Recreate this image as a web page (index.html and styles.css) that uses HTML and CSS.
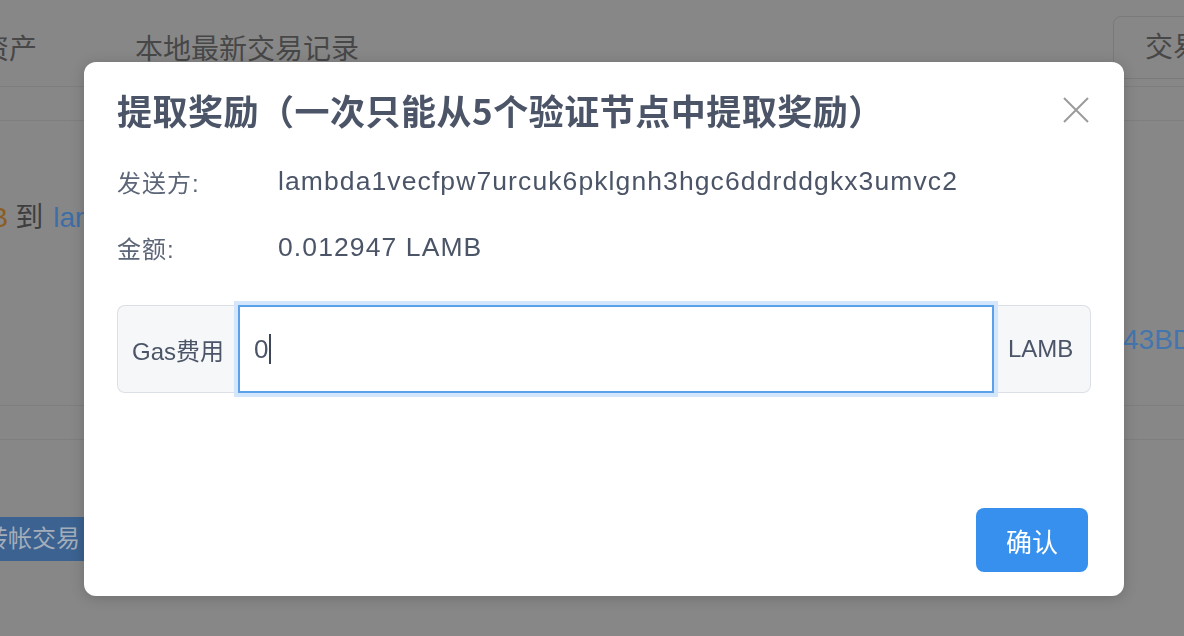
FILE: index.html
```html
<!DOCTYPE html>
<html lang="zh">
<head>
<meta charset="utf-8">
<title>提取奖励</title>
<link rel="stylesheet" href="styles.css">
</head>
<body>
<div class="page">
  <div class="topbar">
    <div class="tabs">
      <span class="tab">资产</span>
      <span class="tab">本地最新交易记录</span>
    </div>
    <div class="topbtn">交易记录</div>
  </div>
  <div class="subbar"></div>
  <div class="row-tx">
    <span class="amt">LAMB</span>
    <span class="to">到</span>
    <span class="addr">lambda1vecfpw7urcuk6pklgnh3hgc6ddrddgkx3umvc2</span>
  </div>
  <div class="row-hash"><span class="hash">43BD9A0C71E2</span></div>
  <div class="sep"></div>
  <div class="sep2"></div>
  <div class="row-btn"><span class="bgbtn">转帐交易</span></div>
</div>

<div class="mask">
  <div class="modal">
    <div class="modal-head">
      <h2 class="modal-title">提取奖励（一次只能从5个验证节点中提取奖励）</h2>
      <svg class="close" width="30" height="30" viewBox="0 0 30 30" aria-label="关闭">
        <path d="M3 3 L27 27 M27 3 L3 27" stroke="#9b9b9b" stroke-width="2" fill="none"/>
      </svg>
    </div>
    <div class="field first">
      <span class="label">发送方:</span>
      <span class="value">lambda1vecfpw7urcuk6pklgnh3hgc6ddrddgkx3umvc2</span>
    </div>
    <div class="field">
      <span class="label">金额:</span>
      <span class="value">0.012947 LAMB</span>
    </div>
    <div class="input-group">
      <div class="addon addon-left">Gas费用</div>
      <div class="input"><span class="input-text">0</span><span class="caret"></span></div>
      <div class="addon addon-right">LAMB</div>
    </div>
    <div class="modal-foot">
      <button class="confirm">确认</button>
    </div>
  </div>
</div>
</body>
</html>
```
FILE: styles.css
```css
* { box-sizing: border-box; }
html, body { margin: 0; padding: 0; }
body {
  width: 1184px;
  height: 636px;
  overflow: hidden;
  font-family: "Liberation Sans", "Noto Sans CJK SC", sans-serif;
}
.page {
  width: 1184px;
  height: 636px;
  background: #878787;
  overflow: hidden;
}
.topbar {
  height: 87px;
  border-bottom: 1px solid #7e7e7e;
  display: flex;
  align-items: flex-start;
}
.tabs {
  display: flex;
  gap: 98px;
  margin-left: -19px;
  padding-top: 14px;
}
.tab {
  font-size: 28px;
  line-height: 72px;
  color: #474747;
  white-space: nowrap;
}
.topbtn {
  margin-left: auto;
  margin-right: -80px;
  margin-top: 16px;
  height: 63px;
  width: 151px;
  border: 1px solid #7a7a7a;
  border-radius: 8px;
  padding-left: 31px;
  font-size: 28px;
  line-height: 61px;
  color: #474747;
  white-space: nowrap;
  overflow: hidden;
}
.subbar {
  height: 34px;
  border-bottom: 1px solid #7e7e7e;
}
.row-tx {
  margin-top: 77px;
  margin-left: -68px;
  height: 40px;
  line-height: 40px;
  font-size: 28px;
  white-space: nowrap;
  display: flex;
  gap: 7px;
}
.amt { color: #8c5c22; }
.to { color: #3e3e3e; }
.addr { color: #3e6ea6; margin-left: 3px; }
.row-hash {
  margin-top: 82px;
  height: 40px;
  line-height: 40px;
  padding-left: 1123px;
  font-size: 28px;
  white-space: nowrap;
  overflow: hidden;
}
.hash { color: #4376ad; }
.sep {
  margin-top: 45px;
  border-bottom: 1px solid #7e7e7e;
}
.sep2 {
  margin-top: 33px;
  border-bottom: 1px solid #7e7e7e;
}
.row-btn {
  margin-top: 77px;
}
.bgbtn {
  display: inline-block;
  margin-left: -40px;
  height: 44px;
  width: 200px;
  padding-left: 24px;
  background: #3b6290;
  color: #a4adba;
  font-size: 24px;
  line-height: 44px;
  border-radius: 4px;
  white-space: nowrap;
}

.mask {
  position: fixed;
  inset: 0;
  padding: 62px 0 0 84px;
}
.modal {
  width: 1040px;
  height: 534px;
  background: #fff;
  border-radius: 12px;
  box-shadow: 0 2px 14px rgba(0, 0, 0, 0.18);
  padding: 24px 33px 24px 33px;
  display: flex;
  flex-direction: column;
}
.modal-head {
  display: flex;
  justify-content: space-between;
  align-items: center;
  height: 48px;
}
.modal-title {
  margin: 0;
  font-family: "Noto Sans CJK SC", sans-serif;
  font-size: 35px;
  letter-spacing: 0.5px;
  font-weight: 700;
  color: #4b5567;
  line-height: 46px;
  white-space: nowrap;
}
.close {
  display: block;
}
.field {
  display: flex;
  align-items: center;
  height: 40px;
  margin-top: 26px;
}
.field.first { margin-top: 27px; }
.label {
  width: 161px;
  flex: none;
  font-size: 24px;
  letter-spacing: 1px;
  color: #5d6678;
}
.value {
  font-size: 26.5px;
  letter-spacing: 1.1px;
  color: #4b5567;
  white-space: nowrap;
}
.input-group {
  margin-top: 38px;
  display: flex;
  height: 88px;
  width: 974px;
}
.addon {
  background: #f6f7f9;
  border: 1px solid #dcdfe5;
  display: flex;
  align-items: center;
  font-size: 24px;
  color: #4b5567;
  white-space: nowrap;
}
.addon-left {
  width: 121px;
  padding-left: 14px;
  border-radius: 8px 0 0 8px;
  border-right: none;
}
.addon-right {
  width: 97px;
  padding-left: 14px;
  border-radius: 0 8px 8px 0;
  border-left: none;
}
.input {
  flex: 1;
  border: 2px solid #5ba1ea;
  box-shadow: 0 0 0 4px #d4e6fb;
  position: relative;
  z-index: 1;
  display: flex;
  align-items: center;
  padding-left: 14px;
  background: #fff;
}
.input-text {
  font-size: 26px;
  color: #4b5567;
}
.caret {
  display: inline-block;
  width: 2px;
  height: 30px;
  margin-left: 1px;
  background: #3c4656;
}
.modal-foot {
  margin-top: auto;
  display: flex;
  justify-content: flex-end;
  padding-right: 3px;
}
.confirm {
  width: 112px;
  height: 64px;
  border: none;
  border-radius: 8px;
  background: #3790ee;
  color: #fff;
  font-family: "Noto Sans CJK SC", sans-serif;
  font-size: 26px;
  padding: 0;
}
```
